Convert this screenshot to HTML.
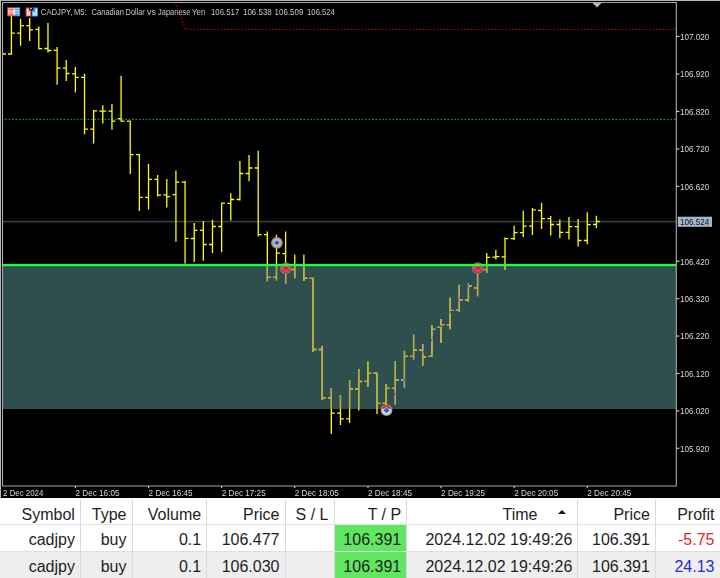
<!DOCTYPE html>
<html><head><meta charset="utf-8"><style>
html,body{margin:0;padding:0;width:720px;height:578px;overflow:hidden;background:#000}
#w{position:relative;width:720px;height:578px;overflow:hidden}
</style></head><body><div id="w">
<svg width="720" height="498" viewBox="0 0 720 498" style="position:absolute;left:0;top:0;will-change:transform">
<defs><clipPath id="rc"><rect x="3" y="266" width="673" height="143"/></clipPath><clipPath id="ch"><rect x="3" y="3" width="673" height="482.5"/></clipPath></defs>
<rect x="0" y="0" width="720" height="498" fill="#000"/>
<rect x="0" y="0" width="720" height="1" fill="#b4b4b4"/>
<rect x="0" y="0" width="1" height="498" fill="#b4b4b4"/>
<g clip-path="url(#ch)">
<rect x="3" y="265" width="673" height="144" fill="#2f4f4f"/>
<rect x="3" y="220.8" width="673" height="1.5" fill="#3e3e3e"/><rect x="3" y="222.3" width="673" height="1" fill="#15191c"/>
<line x1="1.8" y1="119.4" x2="676" y2="119.4" stroke="#1f7f5a" stroke-width="1.14" stroke-dasharray="1.7 1.728"/>
<line x1="175" y1="2" x2="185.5" y2="29.4" stroke="#b00000" stroke-width="1.14" stroke-dasharray="1.7 1.728"/><line x1="186.4" y1="29.4" x2="676" y2="29.4" stroke="#b00000" stroke-width="1.14" stroke-dasharray="1.7 1.728"/>
<path d="M11.40 15.50V54.80M8.00 54.00H11.40M11.40 33.20H14.80M20.54 19.10V45.80M17.14 33.20H20.54M20.54 25.70H23.94M29.68 17.90V40.90M26.28 25.70H29.68M29.68 29.80H33.08M38.82 26.60V49.60M35.42 29.30H38.82M38.82 48.70H42.22M47.96 23.00V52.40M44.56 48.50H47.96M47.96 50.50H51.36M57.10 47.10V84.80M53.70 50.40H57.10M57.10 68.10H60.50M66.24 60.00V80.90M62.84 68.10H66.24M66.24 73.50H69.64M75.38 66.90V92.40M71.98 73.90H75.38M75.38 77.40H78.78M84.52 73.70V134.20M81.12 77.30H84.52M84.52 129.20H87.92M93.67 109.90V143.60M90.27 129.20H93.67M93.67 110.80H97.07M102.81 105.20V123.50M99.41 111.20H102.81M102.81 111.20H106.21M111.95 104.10V129.70M108.55 111.20H111.95M111.95 121.20H115.35M121.09 75.70V121.70M117.69 118.70H121.09M121.09 121.20H124.49M130.23 120.70V174.00M126.83 121.20H130.23M130.23 154.60H133.63M139.37 154.10V211.10M135.97 154.60H139.37M139.37 197.40H142.77M148.51 164.10V209.40M145.11 197.40H148.51M148.51 179.40H151.91M157.65 175.00V196.50M154.25 179.40H157.65M157.65 195.10H161.05M166.79 178.90V207.60M163.39 194.90H166.79M166.79 196.70H170.19M175.93 170.60V241.70M172.53 194.70H175.93M175.93 182.20H179.33M185.07 181.10V263.50M181.67 182.20H185.07M185.07 238.30H188.47M194.21 223.00V262.10M190.81 238.50H194.21M194.21 230.40H197.61M203.35 220.90V260.70M199.95 230.40H203.35M203.35 244.50H206.75M212.49 219.80V253.10M209.09 244.50H212.49M212.49 226.50H215.89M221.63 202.70V252.30M218.23 226.50H221.63M221.63 203.20H225.03M230.77 193.20V220.60M227.37 203.30H230.77M230.77 199.50H234.17M239.91 161.00V200.50M236.51 199.50H239.91M239.91 173.50H243.31M249.06 155.00V181.30M245.66 173.50H249.06M249.06 168.00H252.46M258.20 150.80V236.50M254.80 168.00H258.20M258.20 234.60H261.60M267.34 231.60V281.30M263.94 234.60H267.34M267.34 277.40H270.74M276.48 234.80V280.60M273.08 277.40H276.48M276.48 253.10H279.88M285.62 231.60V283.50M282.22 253.60H285.62M285.62 269.30H289.02M294.76 254.50V278.30M291.36 269.50H294.76M294.76 265.00H298.16M303.90 254.50V281.00M300.50 265.00H303.90M303.90 278.20H307.30M313.04 277.80V351.70M309.64 278.30H313.04M313.04 349.50H316.44M322.18 346.00V399.70M318.78 349.50H322.18M322.18 397.80H325.58M331.32 388.10V434.00M327.92 397.80H331.32M331.32 413.20H334.72M340.46 395.00V425.00M337.06 413.20H340.46M340.46 418.80H343.86M349.60 380.10V423.10M346.20 418.80H349.60M349.60 389.00H353.00M358.74 369.10V410.60M355.34 389.00H358.74M358.74 381.50H362.14M367.88 361.50V386.90M364.48 381.40H367.88M367.88 373.40H371.28M377.02 372.70V413.90M373.62 373.20H377.02M377.02 403.40H380.42M386.16 384.10V410.50M382.76 403.40H386.16M386.16 388.40H389.56M395.31 361.00V404.50M391.91 388.40H395.31M395.31 379.90H398.71M404.45 350.80V387.60M401.05 379.90H404.45M404.45 356.30H407.85M413.59 334.80V359.50M410.19 356.30H413.59M413.59 350.10H416.99M422.73 343.90V366.00M419.33 350.10H422.73M422.73 357.20H426.13M431.87 325.20V356.80M428.47 356.30H431.87M431.87 329.40H435.27M441.01 319.00V342.70M437.61 327.30H441.01M441.01 324.70H444.41M450.15 297.70V329.30M446.75 324.70H450.15M450.15 310.40H453.55M459.29 284.70V311.70M455.89 310.40H459.29M459.29 299.80H462.69M468.43 283.20V301.40M465.03 300.00H468.43M468.43 285.80H471.83M477.57 263.50V296.20M474.17 287.90H477.57M477.57 269.70H480.97M486.71 253.00V273.00M483.31 269.70H486.71M486.71 257.30H490.11M495.85 249.80V259.50M492.45 257.20H495.85M495.85 256.70H499.25M504.99 237.30V270.00M501.59 256.90H504.99M504.99 238.70H508.39M514.13 225.70V240.10M510.73 238.70H514.13M514.13 232.60H517.53M523.27 210.80V237.00M519.87 232.60H523.27M523.27 226.10H526.67M532.41 208.10V234.90M529.01 226.10H532.41M532.41 209.80H535.81M541.55 202.80V229.10M538.15 210.50H541.55M541.55 218.70H544.95M550.70 215.90V235.50M547.30 218.70H550.70M550.70 224.50H554.10M559.84 219.40V238.10M556.44 224.50H559.84M559.84 232.40H563.24M568.98 217.10V239.60M565.58 232.40H568.98M568.98 226.70H572.38M578.12 218.90V246.40M574.72 226.70H578.12M578.12 240.50H581.52M587.26 212.20V244.30M583.86 240.50H587.26M587.26 224.60H590.66M596.40 215.70V228.30M593.00 224.50H596.40M596.40 221.50H599.80M2.5 54H6" stroke="#ffff00" stroke-width="1.3" fill="none"/>
<path d="M11.40 15.50V54.80M8.00 54.00H11.40M11.40 33.20H14.80M20.54 19.10V45.80M17.14 33.20H20.54M20.54 25.70H23.94M29.68 17.90V40.90M26.28 25.70H29.68M29.68 29.80H33.08M38.82 26.60V49.60M35.42 29.30H38.82M38.82 48.70H42.22M47.96 23.00V52.40M44.56 48.50H47.96M47.96 50.50H51.36M57.10 47.10V84.80M53.70 50.40H57.10M57.10 68.10H60.50M66.24 60.00V80.90M62.84 68.10H66.24M66.24 73.50H69.64M75.38 66.90V92.40M71.98 73.90H75.38M75.38 77.40H78.78M84.52 73.70V134.20M81.12 77.30H84.52M84.52 129.20H87.92M93.67 109.90V143.60M90.27 129.20H93.67M93.67 110.80H97.07M102.81 105.20V123.50M99.41 111.20H102.81M102.81 111.20H106.21M111.95 104.10V129.70M108.55 111.20H111.95M111.95 121.20H115.35M121.09 75.70V121.70M117.69 118.70H121.09M121.09 121.20H124.49M130.23 120.70V174.00M126.83 121.20H130.23M130.23 154.60H133.63M139.37 154.10V211.10M135.97 154.60H139.37M139.37 197.40H142.77M148.51 164.10V209.40M145.11 197.40H148.51M148.51 179.40H151.91M157.65 175.00V196.50M154.25 179.40H157.65M157.65 195.10H161.05M166.79 178.90V207.60M163.39 194.90H166.79M166.79 196.70H170.19M175.93 170.60V241.70M172.53 194.70H175.93M175.93 182.20H179.33M185.07 181.10V263.50M181.67 182.20H185.07M185.07 238.30H188.47M194.21 223.00V262.10M190.81 238.50H194.21M194.21 230.40H197.61M203.35 220.90V260.70M199.95 230.40H203.35M203.35 244.50H206.75M212.49 219.80V253.10M209.09 244.50H212.49M212.49 226.50H215.89M221.63 202.70V252.30M218.23 226.50H221.63M221.63 203.20H225.03M230.77 193.20V220.60M227.37 203.30H230.77M230.77 199.50H234.17M239.91 161.00V200.50M236.51 199.50H239.91M239.91 173.50H243.31M249.06 155.00V181.30M245.66 173.50H249.06M249.06 168.00H252.46M258.20 150.80V236.50M254.80 168.00H258.20M258.20 234.60H261.60M267.34 231.60V281.30M263.94 234.60H267.34M267.34 277.40H270.74M276.48 234.80V280.60M273.08 277.40H276.48M276.48 253.10H279.88M285.62 231.60V283.50M282.22 253.60H285.62M285.62 269.30H289.02M294.76 254.50V278.30M291.36 269.50H294.76M294.76 265.00H298.16M303.90 254.50V281.00M300.50 265.00H303.90M303.90 278.20H307.30M313.04 277.80V351.70M309.64 278.30H313.04M313.04 349.50H316.44M322.18 346.00V399.70M318.78 349.50H322.18M322.18 397.80H325.58M331.32 388.10V434.00M327.92 397.80H331.32M331.32 413.20H334.72M340.46 395.00V425.00M337.06 413.20H340.46M340.46 418.80H343.86M349.60 380.10V423.10M346.20 418.80H349.60M349.60 389.00H353.00M358.74 369.10V410.60M355.34 389.00H358.74M358.74 381.50H362.14M367.88 361.50V386.90M364.48 381.40H367.88M367.88 373.40H371.28M377.02 372.70V413.90M373.62 373.20H377.02M377.02 403.40H380.42M386.16 384.10V410.50M382.76 403.40H386.16M386.16 388.40H389.56M395.31 361.00V404.50M391.91 388.40H395.31M395.31 379.90H398.71M404.45 350.80V387.60M401.05 379.90H404.45M404.45 356.30H407.85M413.59 334.80V359.50M410.19 356.30H413.59M413.59 350.10H416.99M422.73 343.90V366.00M419.33 350.10H422.73M422.73 357.20H426.13M431.87 325.20V356.80M428.47 356.30H431.87M431.87 329.40H435.27M441.01 319.00V342.70M437.61 327.30H441.01M441.01 324.70H444.41M450.15 297.70V329.30M446.75 324.70H450.15M450.15 310.40H453.55M459.29 284.70V311.70M455.89 310.40H459.29M459.29 299.80H462.69M468.43 283.20V301.40M465.03 300.00H468.43M468.43 285.80H471.83M477.57 263.50V296.20M474.17 287.90H477.57M477.57 269.70H480.97M486.71 253.00V273.00M483.31 269.70H486.71M486.71 257.30H490.11M495.85 249.80V259.50M492.45 257.20H495.85M495.85 256.70H499.25M504.99 237.30V270.00M501.59 256.90H504.99M504.99 238.70H508.39M514.13 225.70V240.10M510.73 238.70H514.13M514.13 232.60H517.53M523.27 210.80V237.00M519.87 232.60H523.27M523.27 226.10H526.67M532.41 208.10V234.90M529.01 226.10H532.41M532.41 209.80H535.81M541.55 202.80V229.10M538.15 210.50H541.55M541.55 218.70H544.95M550.70 215.90V235.50M547.30 218.70H550.70M550.70 224.50H554.10M559.84 219.40V238.10M556.44 224.50H559.84M559.84 232.40H563.24M568.98 217.10V239.60M565.58 232.40H568.98M568.98 226.70H572.38M578.12 218.90V246.40M574.72 226.70H578.12M578.12 240.50H581.52M587.26 212.20V244.30M583.86 240.50H587.26M587.26 224.60H590.66M596.40 215.70V228.30M593.00 224.50H596.40M596.40 221.50H599.80M2.5 54H6" stroke="#b8a455" stroke-width="1.3" fill="none" clip-path="url(#rc)"/>
<line x1="386.5" y1="406.4" x2="477.8" y2="271.5" stroke="#3030d0" stroke-width="1.14" stroke-dasharray="1.7 1.728"/>
<circle cx="276.9" cy="242.8" r="5.9" fill="#a39484"/><circle cx="276.9" cy="242.8" r="4.2" fill="#bfb4a8"/><path d="M276.9 239.60000000000002L280.79999999999995 242.8L276.9 246.0L273.0 242.8Z" fill="#c8dcf0"/><path d="M276.9 240.3L279.9 242.8L276.9 245.3L273.9 242.8Z" fill="#1a62d2"/>
<circle cx="285.8" cy="268.3" r="5.9" fill="#5a9496"/><circle cx="285.8" cy="268.3" r="5.0" fill="#cf3320"/><path d="M285.8 264.40000000000003L290.1 268.3L285.8 272.2L281.5 268.3Z" fill="#e46a78"/><path d="M285.8 265.40000000000003L289.0 268.3L285.8 271.2L282.6 268.3Z" fill="#e2145e"/>
<circle cx="477.8" cy="268.2" r="5.9" fill="#5a9496"/><circle cx="477.8" cy="268.2" r="5.0" fill="#cf3320"/><path d="M477.8 264.3L482.1 268.2L477.8 272.09999999999997L473.5 268.2Z" fill="#e46a78"/><path d="M477.8 265.3L481.0 268.2L477.8 271.09999999999997L474.6 268.2Z" fill="#e2145e"/>
<circle cx="386.5" cy="410.2" r="5.9" fill="#a69886"/><circle cx="386.5" cy="410.2" r="4.5" fill="#dcd6ce"/><path d="M381.73 408.7A5 5 0 0 1 391.27 408.7Z" fill="#cf3320"/><path d="M386.5 406.8L390.4 410.59999999999997L386.5 413.8L382.6 410.59999999999997Z" fill="#c4dcf2"/><path d="M386.5 407.59999999999997L389.5 410.59999999999997L386.5 413.0L383.5 410.59999999999997Z" fill="#1a62d2"/>
<rect x="3" y="263.9" width="673" height="2.3" fill="#1eff3c"/>
</g>
<path d="M2.5 486V2.5H676.3V486H2.5" fill="none" stroke="#a8a8a8" stroke-width="1.14"/>
<path d="M592.5 3H601.5L597 7.5Z" fill="#a9b9d2"/>
<rect x="676" y="35.90" width="3.4" height="1.14" fill="#c8c8c8"/>
<rect x="676" y="73.50" width="3.4" height="1.14" fill="#c8c8c8"/>
<rect x="676" y="110.90" width="3.4" height="1.14" fill="#c8c8c8"/>
<rect x="676" y="148.40" width="3.4" height="1.14" fill="#c8c8c8"/>
<rect x="676" y="185.70" width="3.4" height="1.14" fill="#c8c8c8"/>
<rect x="676" y="260.70" width="3.4" height="1.14" fill="#c8c8c8"/>
<rect x="676" y="298.10" width="3.4" height="1.14" fill="#c8c8c8"/>
<rect x="676" y="335.50" width="3.4" height="1.14" fill="#c8c8c8"/>
<rect x="676" y="372.90" width="3.4" height="1.14" fill="#c8c8c8"/>
<rect x="676" y="410.30" width="3.4" height="1.14" fill="#c8c8c8"/>
<rect x="676" y="447.70" width="3.4" height="1.14" fill="#c8c8c8"/>
<g font-family="Liberation Sans, sans-serif" font-size="9px" fill="#d8d8d8">
<text x="680.0" y="39.70" textLength="29.2" lengthAdjust="spacingAndGlyphs">107.020</text>
<text x="680.0" y="77.30" textLength="29.2" lengthAdjust="spacingAndGlyphs">106.920</text>
<text x="680.0" y="114.70" textLength="29.2" lengthAdjust="spacingAndGlyphs">106.820</text>
<text x="680.0" y="152.20" textLength="29.2" lengthAdjust="spacingAndGlyphs">106.720</text>
<text x="680.0" y="189.50" textLength="29.2" lengthAdjust="spacingAndGlyphs">106.620</text>
<text x="680.0" y="264.50" textLength="29.2" lengthAdjust="spacingAndGlyphs">106.420</text>
<text x="680.0" y="301.90" textLength="29.2" lengthAdjust="spacingAndGlyphs">106.320</text>
<text x="680.0" y="339.30" textLength="29.2" lengthAdjust="spacingAndGlyphs">106.220</text>
<text x="680.0" y="376.70" textLength="29.2" lengthAdjust="spacingAndGlyphs">106.120</text>
<text x="680.0" y="414.10" textLength="29.2" lengthAdjust="spacingAndGlyphs">106.020</text>
<text x="680.0" y="451.50" textLength="29.2" lengthAdjust="spacingAndGlyphs">105.920</text>
</g>
<rect x="677.8" y="216.7" width="34.2" height="10.1" fill="#a4b6cc"/>
<text x="680.0" y="225.0" font-family="Liberation Sans, sans-serif" font-size="9px" fill="#101010" textLength="29.2" lengthAdjust="spacingAndGlyphs">106.524</text>
<g font-family="Liberation Sans, sans-serif" font-size="9px" fill="#d8d8d8">
<text x="3.10" y="495.8" textLength="40.3" lengthAdjust="spacingAndGlyphs">2 Dec 2024</text>
<rect x="74.90" y="486" width="1.14" height="2" fill="#c8c8c8"/>
<text x="75.50" y="495.8" textLength="44.0" lengthAdjust="spacingAndGlyphs">2 Dec 16:05</text>
<rect x="148.00" y="486" width="1.14" height="2" fill="#c8c8c8"/>
<text x="148.60" y="495.8" textLength="44.0" lengthAdjust="spacingAndGlyphs">2 Dec 16:45</text>
<rect x="221.10" y="486" width="1.14" height="2" fill="#c8c8c8"/>
<text x="221.70" y="495.8" textLength="44.0" lengthAdjust="spacingAndGlyphs">2 Dec 17:25</text>
<rect x="294.20" y="486" width="1.14" height="2" fill="#c8c8c8"/>
<text x="294.80" y="495.8" textLength="44.0" lengthAdjust="spacingAndGlyphs">2 Dec 18:05</text>
<rect x="367.40" y="486" width="1.14" height="2" fill="#c8c8c8"/>
<text x="368.00" y="495.8" textLength="44.0" lengthAdjust="spacingAndGlyphs">2 Dec 18:45</text>
<rect x="440.50" y="486" width="1.14" height="2" fill="#c8c8c8"/>
<text x="441.10" y="495.8" textLength="44.0" lengthAdjust="spacingAndGlyphs">2 Dec 19:25</text>
<rect x="513.60" y="486" width="1.14" height="2" fill="#c8c8c8"/>
<text x="514.20" y="495.8" textLength="44.0" lengthAdjust="spacingAndGlyphs">2 Dec 20:05</text>
<rect x="586.70" y="486" width="1.14" height="2" fill="#c8c8c8"/>
<text x="587.30" y="495.8" textLength="44.0" lengthAdjust="spacingAndGlyphs">2 Dec 20:45</text>
</g>
<rect x="7.2" y="7.3" width="7.2" height="9" fill="#e24848"/><rect x="14.4" y="7.3" width="5.8" height="9" fill="#3a8ee2"/><rect x="8.3" y="8.4" width="10.8" height="6.8" fill="#fbf4f4"/><rect x="8.9" y="9.1" width="4.8" height="1.3" fill="#e25252"/><rect x="8.9" y="11.4" width="4.8" height="1.3" fill="#e88080"/><rect x="8.9" y="13.6" width="4.8" height="1.3" fill="#e25252"/><rect x="14.9" y="9.1" width="3.8" height="1.3" fill="#3a8ee2"/><rect x="14.9" y="11.4" width="3.8" height="1.3" fill="#3a8ee2"/><rect x="14.9" y="13.6" width="3.8" height="1.3" fill="#3a8ee2"/>
<rect x="25.6" y="7.5" width="5.6" height="9" fill="#e04a4a"/><rect x="26.8" y="8.6" width="1.8" height="7" fill="#f6e0e0"/><rect x="28.6" y="11.5" width="1.6" height="4.1" fill="#f6e0e0"/><rect x="31.8" y="7.5" width="6.2" height="9" fill="#3a96e8"/><rect x="32.8" y="12" width="2.4" height="3.6" fill="#c8e4fa"/><rect x="35.2" y="8.6" width="1.8" height="7" fill="#c8e4fa"/><rect x="29.3" y="7.3" width="2.6" height="2.4" fill="#000"/><rect x="30.2" y="7.8" width="2.6" height="1.2" fill="#e8e8e8"/><rect x="31.8" y="7.5" width="1.6" height="2.6" fill="#000"/>
<g font-family="Liberation Sans, sans-serif" font-size="8.8px" fill="#c8c8c8">
<text x="40.85" y="15" textLength="31.45" lengthAdjust="spacingAndGlyphs">CADJPY,</text>
<text x="74.00" y="15" textLength="12.65" lengthAdjust="spacingAndGlyphs">M5:</text>
<text x="91.50" y="15" textLength="32.40" lengthAdjust="spacingAndGlyphs">Canadian</text>
<text x="125.60" y="15" textLength="19.20" lengthAdjust="spacingAndGlyphs">Dollar</text>
<text x="147.10" y="15" textLength="8.90" lengthAdjust="spacingAndGlyphs">vs</text>
<text x="158.10" y="15" textLength="32.30" lengthAdjust="spacingAndGlyphs">Japanese</text>
<text x="192.10" y="15" textLength="13.30" lengthAdjust="spacingAndGlyphs">Yen</text>
<text x="211.00" y="15" textLength="28.30" lengthAdjust="spacingAndGlyphs">106.517</text>
<text x="243.00" y="15" textLength="28.80" lengthAdjust="spacingAndGlyphs">106.538</text>
<text x="274.60" y="15" textLength="28.80" lengthAdjust="spacingAndGlyphs">106.509</text>
<text x="307.10" y="15" textLength="27.80" lengthAdjust="spacingAndGlyphs">106.524</text>
</g>
</svg>
<div style="position:absolute;left:0;top:498.2px;width:720px;height:80px;background:#fff;overflow:hidden">
<div style="position:absolute;left:0;top:52.8px;width:720px;height:28px;background:#eeeeee"></div><div style="position:absolute;left:0;top:52.8px;width:720px;height:1px;background:#dedede"></div>
<div style="position:absolute;left:0;top:26.3px;width:720px;height:1px;background:#e2e2e2"></div>
<div style="position:absolute;left:334px;top:26.6px;width:72.4px;height:26px;background:#60e660"></div>
<div style="position:absolute;left:334px;top:53.6px;width:72.4px;height:27px;background:#60e660"></div>
<div style="position:absolute;left:79.90px;top:2px;width:1px;height:78px;background:#dadada"></div>
<div style="position:absolute;left:131.50px;top:2px;width:1px;height:78px;background:#dadada"></div>
<div style="position:absolute;left:206.20px;top:2px;width:1px;height:78px;background:#dadada"></div>
<div style="position:absolute;left:284.50px;top:2px;width:1px;height:78px;background:#dadada"></div>
<div style="position:absolute;left:333.50px;top:2px;width:1px;height:78px;background:#dadada"></div>
<div style="position:absolute;left:406.20px;top:2px;width:1px;height:78px;background:#dadada"></div>
<div style="position:absolute;left:577.30px;top:2px;width:1px;height:78px;background:#dadada"></div>
<div style="position:absolute;left:654.90px;top:2px;width:1px;height:78px;background:#dadada"></div>
<div style="position:absolute;left:0.00px;width:74.90px;top:6.5px;height:20px;line-height:20px;text-align:right;font-family:&quot;Liberation Sans&quot;,sans-serif;font-size:16px;color:#1e1e1e;white-space:nowrap;">Symbol</div>
<div style="position:absolute;left:80.40px;width:46.10px;top:6.5px;height:20px;line-height:20px;text-align:right;font-family:&quot;Liberation Sans&quot;,sans-serif;font-size:16px;color:#1e1e1e;white-space:nowrap;">Type</div>
<div style="position:absolute;left:132.00px;width:69.20px;top:6.5px;height:20px;line-height:20px;text-align:right;font-family:&quot;Liberation Sans&quot;,sans-serif;font-size:16px;color:#1e1e1e;white-space:nowrap;">Volume</div>
<div style="position:absolute;left:206.70px;width:72.80px;top:6.5px;height:20px;line-height:20px;text-align:right;font-family:&quot;Liberation Sans&quot;,sans-serif;font-size:16px;color:#1e1e1e;white-space:nowrap;">Price</div>
<div style="position:absolute;left:285.00px;width:43.50px;top:6.5px;height:20px;line-height:20px;text-align:right;font-family:&quot;Liberation Sans&quot;,sans-serif;font-size:16px;color:#1e1e1e;white-space:nowrap;">S / L</div>
<div style="position:absolute;left:334.00px;width:67.20px;top:6.5px;height:20px;line-height:20px;text-align:right;font-family:&quot;Liberation Sans&quot;,sans-serif;font-size:16px;color:#1e1e1e;white-space:nowrap;">T / P</div>
<div style="position:absolute;left:406.70px;width:130.80px;top:6.5px;height:20px;line-height:20px;text-align:right;font-family:&quot;Liberation Sans&quot;,sans-serif;font-size:16px;color:#1e1e1e;white-space:nowrap;">Time</div>
<div style="position:absolute;left:577.80px;width:72.10px;top:6.5px;height:20px;line-height:20px;text-align:right;font-family:&quot;Liberation Sans&quot;,sans-serif;font-size:16px;color:#1e1e1e;white-space:nowrap;">Price</div>
<div style="position:absolute;left:655.40px;width:59.10px;top:6.5px;height:20px;line-height:20px;text-align:right;font-family:&quot;Liberation Sans&quot;,sans-serif;font-size:16px;color:#1e1e1e;white-space:nowrap;">Profit</div>
<div style="position:absolute;left:557.5px;top:12.2px;width:0;height:0;border-left:4.7px solid transparent;border-right:4.7px solid transparent;border-bottom:4.6px solid #111"></div>
<div style="position:absolute;left:0.00px;width:74.90px;top:32.0px;height:20px;line-height:20px;text-align:right;font-family:&quot;Liberation Sans&quot;,sans-serif;font-size:16px;color:#1e1e1e;white-space:nowrap;">cadjpy</div>
<div style="position:absolute;left:80.40px;width:46.10px;top:32.0px;height:20px;line-height:20px;text-align:right;font-family:&quot;Liberation Sans&quot;,sans-serif;font-size:16px;color:#1e1e1e;white-space:nowrap;">buy</div>
<div style="position:absolute;left:132.00px;width:69.20px;top:32.0px;height:20px;line-height:20px;text-align:right;font-family:&quot;Liberation Sans&quot;,sans-serif;font-size:16px;color:#1e1e1e;white-space:nowrap;">0.1</div>
<div style="position:absolute;left:206.70px;width:72.80px;top:32.0px;height:20px;line-height:20px;text-align:right;font-family:&quot;Liberation Sans&quot;,sans-serif;font-size:16px;color:#1e1e1e;white-space:nowrap;">106.477</div>
<div style="position:absolute;left:334.00px;width:67.20px;top:32.0px;height:20px;line-height:20px;text-align:right;font-family:&quot;Liberation Sans&quot;,sans-serif;font-size:16px;color:#1e1e1e;white-space:nowrap;">106.391</div>
<div style="position:absolute;left:406.70px;width:165.60px;top:32.0px;height:20px;line-height:20px;text-align:right;font-family:&quot;Liberation Sans&quot;,sans-serif;font-size:16px;color:#1e1e1e;white-space:nowrap;">2024.12.02 19:49:26</div>
<div style="position:absolute;left:577.80px;width:72.10px;top:32.0px;height:20px;line-height:20px;text-align:right;font-family:&quot;Liberation Sans&quot;,sans-serif;font-size:16px;color:#1e1e1e;white-space:nowrap;">106.391</div>
<div style="position:absolute;left:655.40px;width:59.10px;top:32.0px;height:20px;line-height:20px;text-align:right;font-family:&quot;Liberation Sans&quot;,sans-serif;font-size:16px;color:#e8202a;white-space:nowrap;">-5.75</div>
<div style="position:absolute;left:0.00px;width:74.90px;top:58.5px;height:20px;line-height:20px;text-align:right;font-family:&quot;Liberation Sans&quot;,sans-serif;font-size:16px;color:#1e1e1e;white-space:nowrap;">cadjpy</div>
<div style="position:absolute;left:80.40px;width:46.10px;top:58.5px;height:20px;line-height:20px;text-align:right;font-family:&quot;Liberation Sans&quot;,sans-serif;font-size:16px;color:#1e1e1e;white-space:nowrap;">buy</div>
<div style="position:absolute;left:132.00px;width:69.20px;top:58.5px;height:20px;line-height:20px;text-align:right;font-family:&quot;Liberation Sans&quot;,sans-serif;font-size:16px;color:#1e1e1e;white-space:nowrap;">0.1</div>
<div style="position:absolute;left:206.70px;width:72.80px;top:58.5px;height:20px;line-height:20px;text-align:right;font-family:&quot;Liberation Sans&quot;,sans-serif;font-size:16px;color:#1e1e1e;white-space:nowrap;">106.030</div>
<div style="position:absolute;left:334.00px;width:67.20px;top:58.5px;height:20px;line-height:20px;text-align:right;font-family:&quot;Liberation Sans&quot;,sans-serif;font-size:16px;color:#1e1e1e;white-space:nowrap;">106.391</div>
<div style="position:absolute;left:406.70px;width:165.60px;top:58.5px;height:20px;line-height:20px;text-align:right;font-family:&quot;Liberation Sans&quot;,sans-serif;font-size:16px;color:#1e1e1e;white-space:nowrap;">2024.12.02 19:49:26</div>
<div style="position:absolute;left:577.80px;width:72.10px;top:58.5px;height:20px;line-height:20px;text-align:right;font-family:&quot;Liberation Sans&quot;,sans-serif;font-size:16px;color:#1e1e1e;white-space:nowrap;">106.391</div>
<div style="position:absolute;left:655.40px;width:59.10px;top:58.5px;height:20px;line-height:20px;text-align:right;font-family:&quot;Liberation Sans&quot;,sans-serif;font-size:16px;color:#2a2ad8;white-space:nowrap;">24.13</div>
</div>
</div></body></html>
